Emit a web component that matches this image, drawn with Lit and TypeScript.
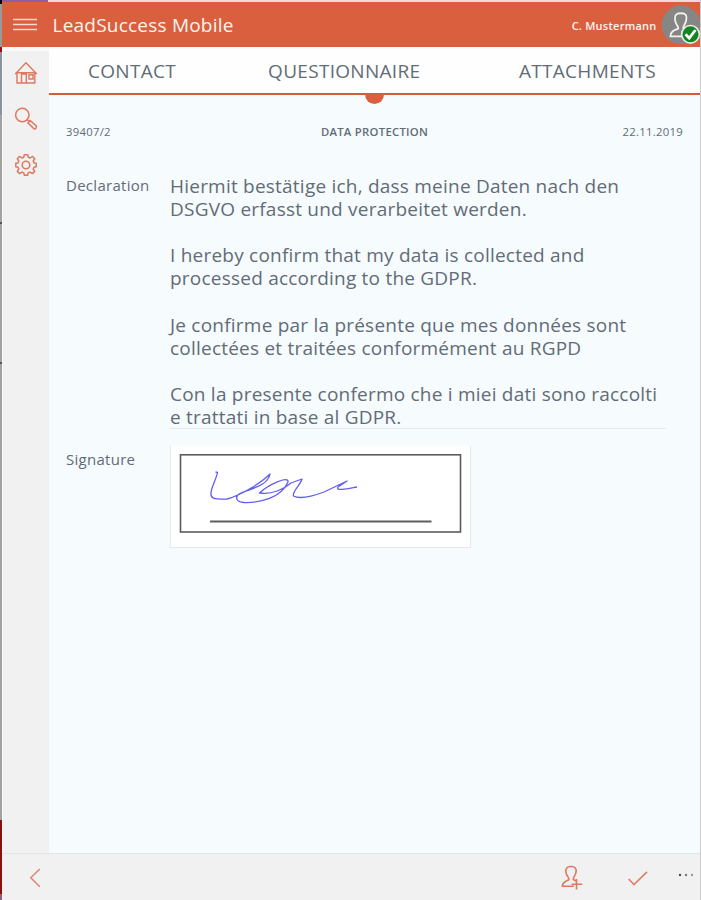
import { LitElement, html, css, svg } from "lit";
import { customElement } from "lit/decorators.js";

const icons: Record<string, unknown> = {
  menu: svg`<svg width="24" height="14" viewBox="0 0 24 14" fill="none" stroke="#fbd9cb" stroke-width="1.5"><path d="M0 1.6H24M0 6.6H24M0 11.6H24"/></svg>`,
  home: svg`<svg width="24" height="24" viewBox="0 0 24 24" fill="none" stroke="#dd7861" stroke-width="1.4"><path d="M3.5 11.8L1.2 13L12 1.8L22.8 13L20.8 11.8V22H3V12M3.5 11.8H20.5M7.5 22V13H12.3V22M15 13.8H19V18H15Z"/></svg>`,
  search: svg`<svg width="24" height="24" viewBox="0 0 24 24" fill="none" stroke="#dd7861" stroke-width="1.5"><circle cx="8.3" cy="8" r="6.7"/><path d="M13 12.5L15 14.5M14 16L16.2 13.5L22.3 19C22.8 20.8 21.5 22.3 20 21.8Z"/></svg>`,
  gear: svg`<svg width="24" height="24" viewBox="0 0 24 24" fill="none" stroke="#dd7861" stroke-width="1.5" stroke-linejoin="round"><circle cx="12" cy="12" r="3.8"/><path d="M10.2 1.8H13.8L14.3 4.2L16.2 5L18.6 3.4L20.8 5.7L19.2 8L20 9.9L22.2 10.3V13.7L20 14.2L19.2 16L20.7 18.4L18.4 20.6L16.1 19.1L14.2 19.9L13.7 22.2H10.3L9.8 19.9L8 19.1L5.6 20.6L3.3 18.4L4.8 16L4 14.2L1.8 13.7V10.3L4 9.9L4.8 8L3.3 5.7L5.6 3.4L8 5L9.8 4.2Z"/></svg>`,
  back: svg`<svg width="12" height="20" viewBox="0 0 12 20" fill="none" stroke="#df8571" stroke-width="1.5"><path d="M10.8 1L1.8 9.8L10.8 18.8"/></svg>`,
  check: svg`<svg width="20" height="15" viewBox="0 0 20 15" fill="none" stroke="#df806a" stroke-width="1.7"><path d="M.7 8L6 13.5L19 .8"/></svg>`,
  addPerson: svg`<svg width="22" height="26" viewBox="0 0 22 26" fill="none" stroke="#df7862" stroke-width="1.6">
    <path d="M8 14.7C5 16 1.6 17 1.3 21.3H13M8 14.7C8.6 12.6 5 11 5 7.3C4.2 3.7 6.2 1.3 10 1.6C13.8 1.3 15.8 3.6 15 7.1C14.8 10.5 12 12 12.3 14.5L15 16M15.5 14V24.5M10.5 19.3H21.3"/></svg>`,
  more: svg`<svg width="16" height="4" viewBox="0 0 16 4"><circle cx="2" cy="2" r="1.2" fill="#4d4d4d"/><circle cx="8" cy="2" r="1.2" fill="#777"/><circle cx="14" cy="2" r="1.2" fill="#999"/></svg>`,
  avatar: svg`<svg width="40" height="40" viewBox="0 0 40 40"><circle cx="20" cy="20" r="19.3" fill="#868785"/>
    <path d="M17.3 23.8C13.5 25.2 9.5 26 9.4 31.4H23M17.3 23.8C17.8 20.8 13.7 19 14 14C13.3 10.2 15.8 7.9 19.9 8.3C24 7.9 26.2 10.4 25.4 14C25.4 18.6 21.8 20.8 22.3 23.4L24 24.5" fill="none" stroke="#f2f2f2" stroke-width="1.8"/>
    <circle cx="29.5" cy="29.3" r="9.6" fill="#e9efe6"/><circle cx="29.5" cy="29.3" r="8" fill="#118521"/>
    <path d="M24.5 29.3L28.2 33.2L34.5 25" fill="none" stroke="#fff" stroke-width="2.8"/></svg>`,
};

@customElement("app-root")
class AppRoot extends LitElement {
  static styles = css`
    :host { display: flex; box-sizing: border-box; width: 701px; height: 900px; overflow: hidden; font-family: "Open Sans", sans-serif; color: #626c76; white-space: nowrap; background: #f1f1f1; }
    svg { display: block; flex: none; }
    .edge { width: 2px; flex: none; background: linear-gradient(#000 0 4px, #999 4px 47px, #a00c0c 47px 52px, #8795a0 52px 115px, #a2a2a2 115px 222px, #555 222px 224px, #a2a2a2 224px 362px, #555 362px 364px, #a2a2a2 364px 820px, #8b1008 820px 894px, #8b6078 894px); }
    .window { flex: 1; display: flex; flex-direction: column; min-width: 0; border-right: 1px solid #ccc; }
    .strip { height: 2px; flex: none; background: linear-gradient(90deg, #8960a8 46px, #f0d9dc 46px); }
    .header { height: 45px; flex: none; display: flex; align-items: center; background: #d95f3f; color: #fff5ef; padding-left: 11px; }
    .title { margin-left: 15.5px; font-size: 19px; flex: 1; letter-spacing: 0.22px; }
    .user { font-size: 11px; font-weight: 600; margin: 2px 4.5px 0 0; letter-spacing: 0.25px; }
    .avatar { margin-right: -1px; }
    .body { flex: 1; display: flex; min-height: 0; }
    .side { width: 47px; flex: none; border-left: 1px solid #f8f8f8; border-top: 4px solid #fbfbfb; box-sizing: border-box; display: flex; flex-direction: column; align-items: center; gap: 22px; padding: 10px 1px 0 0; }
    .main { flex: 1; background: #f6fbfe; display: flex; flex-direction: column; }
    .tabs { position: relative; height: 46px; flex: none; background: #fefefe; border-bottom: 2px solid #d45c3d; display: flex; align-items: center; padding: 0 44px 0 39px; font-size: 19px; letter-spacing: 0.3px; line-height: 26px; }
    .tab { flex: none; padding-bottom: 1px; margin-top: 2px; }
    .wide { margin-left: 92px; margin-right: auto; }
    .dot { position: absolute; top: 47px; left: 50%; margin-left: -9.5px; width: 19px; height: 10px; border-radius: 0 0 10px 10px; background: #d95f3f; }
    .meta { display: grid; grid-template-columns: 1fr auto 1fr; padding: 28px 17px 0 17px; font-size: 11.3px; line-height: 18px; letter-spacing: 0.28px; }
    .center { font-weight: 600; }
    .right { text-align: right; }
    .form { display: grid; grid-template-columns: 104px 496px; padding: 33px 0 0 17px; }
    .label { font-size: 15px; line-height: 21px; letter-spacing: 0.28px; padding-top: 1px; }
    .declaration { font-size: 19px; letter-spacing: 0.22px; line-height: 23.1px; height: 255px; padding-top: 1px; border-bottom: 1px solid #e4e9ec; box-sizing: border-box; }
    .para { margin-bottom: 23.1px; }
    .signlabel { padding-top: 20px; }
    .signature { margin-top: 16px; width: 299px; height: 101px; background: #fff; border: 1px solid #e7eaec; border-top-color: #fafcfd; }
    .footer { height: 47px; box-sizing: border-box; flex: none; border-top: 1px solid #e3e5e6; display: flex; align-items: center; padding: 2px 6.5px 0 26.5px; }
    .space { flex: 1; }
    .check { margin: 0 30px 0 45px; }
    .more { padding-bottom: 6px; }
  `;

  paragraphs = [
    ["Hiermit bestätige ich, dass meine Daten nach den", "DSGVO erfasst und verarbeitet werden."],
    ["I hereby confirm that my data is collected and", "processed according to the GDPR."],
    ["Je confirme par la présente que mes données sont", "collectées et traitées conformément au RGPD"],
    ["Con la presente confermo che i miei dati sono raccolti", "e trattati in base al GDPR."],
  ];

  render() {
    return html`
      <div class="edge"></div>
      <div class="window">
        <div class="strip"></div>
        <div class="header">
          ${icons.menu}<span class="title">LeadSuccess Mobile</span>
          <span class="user">C. Mustermann</span><span class="avatar">${icons.avatar}</span>
        </div>
        <div class="body">
          <nav class="side">${icons.home}${icons.search}${icons.gear}</nav>
          <main class="main">
            <div class="tabs">
              <span class="tab">CONTACT</span>
              <span class="tab wide">QUESTIONNAIRE</span>
              <span class="tab">ATTACHMENTS</span>
              <span class="dot"></span>
            </div>
            <div class="meta">
              <span>39407/2</span><span class="center">DATA PROTECTION</span><span class="right">22.11.2019</span>
            </div>
            <div class="form">
              <div class="label">Declaration</div>
              <div class="declaration">
                ${this.paragraphs.map((lines) => html`<div class="para">${lines[0]}<br />${lines[1]}</div>`)}
              </div>
              <div class="label signlabel">Signature</div>
              <div class="signature">
                <svg width="299" height="101" viewBox="171 446 299 101" fill="none">
                  <rect x="180.5" y="454.8" width="280" height="77.2" stroke="#5c5c5c" stroke-width="1.6"/>
                  <path d="M210 521.6H431.5" stroke="#5e5e5e" stroke-width="2"/>
                  <path d="M215.5 472L217.5 472.5C216.5 479 210 489 211 495C212 500 219 499 227 499C242 495 262 482 270 474C268 486 249 489 239 494C235 497 236 502 244 502.5C260 503 281 498 288 482C289 475 268 485 259.5 493C272 495 284 489 291 483L302 479C300 486 292 491 293.5 496C301 500 316 495 324 492L347 481L338 487C335 492 351 488 357 487" stroke="#625ff0" stroke-width="1.3" stroke-linejoin="round"/>
                </svg>
              </div>
            </div>
          </main>
        </div>
        <div class="footer">
          ${icons.back}<span class="space"></span>${icons.addPerson}
          <span class="check">${icons.check}</span><span class="more">${icons.more}</span>
        </div>
      </div>
    `;
  }
}
